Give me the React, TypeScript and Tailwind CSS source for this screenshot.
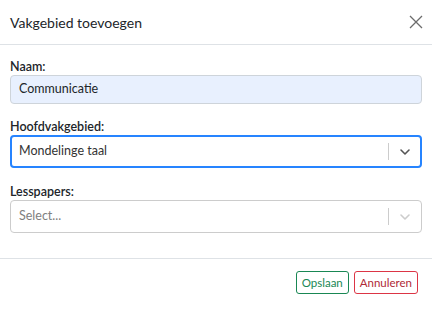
import { ChevronDown } from "lucide-react";

function Label({ children }: { children: React.ReactNode }) {
  return <label className="block text-[12.5px] leading-[16px] text-[#212529] font-semibold">{children}</label>;
}

export default function App() {
  return (
    <div className="w-[432px] h-[309px] bg-white text-[#212529]" style={{ fontFamily: 'Lato, "Open Sans", sans-serif' }}>
      <div className="h-[45px] flex items-center justify-between pl-[10px] pr-[9px] border-b border-[#dee2e6]">
        <h5 className="text-[14px] text-[#212529]">Vakgebied toevoegen</h5>
        <button className="w-[14px] h-[14px] flex items-center justify-center text-[#6c6c6c]">
          <svg width="14" height="14" viewBox="0 0 14 14" fill="none" stroke="currentColor" strokeWidth="1.3">
            <path d="M1 1L13 13M13 1L1 13" />
          </svg>
        </button>
      </div>

      <div className="px-[10px] pt-[14px] pb-[25px] border-b border-[#dee2e6]">
        <Label>Naam:</Label>
        <div className="h-[29px] rounded-[4px] border border-[#ced4da] bg-[#e8f0fe] flex items-center px-[8px] text-[12.5px] text-[#212529]">
          Communicatie
        </div>

        <div className="mt-[15px]">
          <Label>Hoofdvakgebied:</Label>
          <div className="h-[33px] rounded-[4px] border-2 border-[#2684ff] flex items-center text-[12.5px] text-[#333]">
            <span className="flex-1 pl-[7px]">Mondelinge taal</span>
            <span className="w-px h-[17px] bg-[#ccc]" />
            <span className="w-[31px] flex items-center justify-center text-[#555]">
              <ChevronDown size={16} strokeWidth={2.4} />
            </span>
          </div>
        </div>

        <div className="mt-[16px]">
          <Label>Lesspapers:</Label>
          <div className="h-[33px] rounded-[4px] border border-[#cccccc] flex items-center text-[12.5px] text-[#808080]">
            <span className="flex-1 pl-[8px]">Select...</span>
            <span className="w-px h-[17px] bg-[#ccc]" />
            <span className="w-[32px] flex items-center justify-center text-[#ccc]">
              <ChevronDown size={16} strokeWidth={2.4} />
            </span>
          </div>
        </div>
      </div>

      <div className="flex justify-end gap-[5px] pr-[14px] pt-[12px]">
        <button className="h-[23px] px-[5px] rounded-[3px] border border-[#198754] text-[#198754] text-[11.5px] leading-none">Opslaan</button>
        <button className="h-[23px] px-[5px] rounded-[3px] border border-[#dc3545] text-[#b02a37] text-[11.5px] leading-none">Annuleren</button>
      </div>
    </div>
  );
}
